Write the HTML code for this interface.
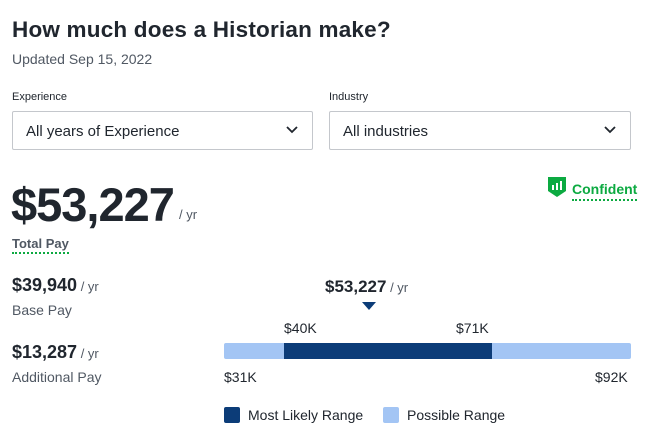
<!DOCTYPE html><html><head><style>
body{margin:0;width:654px;height:446px;background:#fff;font-family:"Liberation Sans",sans-serif;color:#20262e;position:relative;overflow:hidden}
.a{position:absolute;white-space:nowrap}
.sel{position:absolute;top:111px;height:39px;border:1px solid #c4c7cc;border-radius:2px;box-sizing:border-box;font-size:15px;line-height:39px;padding-left:13px}
.sel svg{position:absolute;right:14px;top:14px}
.g{color:#505863}
</style></head><body>
<div class="a" style="left:12px;top:17px;font-size:22.5px;letter-spacing:0.2px;font-weight:bold">How much does a Historian make?</div>
<div class="a g" style="left:12px;top:51px;font-size:14px">Updated Sep 15, 2022</div>
<div class="a" style="left:12px;top:91px;font-size:11px">Experience</div>
<div class="a" style="left:329px;top:91px;font-size:11px">Industry</div>
<div class="sel" style="left:12px;width:301px">All years of Experience<svg width="12" height="8"><path d="M1 1l5 5 5-5" stroke="#20262e" stroke-width="1.8" fill="none"/></svg></div>
<div class="sel" style="left:329px;width:302px">All industries<svg width="12" height="8"><path d="M1 1l5 5 5-5" stroke="#20262e" stroke-width="1.8" fill="none"/></svg></div>
<div class="a" style="left:11px;top:177px;font-size:47px;font-weight:bold;letter-spacing:-1px">$53,227</div>
<div class="a g" style="left:179px;top:207px;font-size:13px">/ yr</div>
<div class="a g" style="left:12px;top:236px;font-size:13px;font-weight:bold;border-bottom:2px dotted #0caa41;padding-bottom:1px">Total Pay</div>
<svg class="a" style="left:547px;top:176px" width="20" height="22"><path d="M1 1h18v14l-9 6-9-6z" fill="#0caa41"/><rect x="5" y="9" width="2" height="5" fill="#fff"/><rect x="9" y="7" width="2" height="7" fill="#fff"/><rect x="13" y="5" width="2" height="9" fill="#fff"/></svg>
<div class="a" style="left:572px;top:181px;font-size:14px;font-weight:bold;color:#0caa41;border-bottom:2px dotted #0caa41;padding-bottom:2px">Confident</div>
<div class="a" style="left:12px;top:275px;font-size:18px;font-weight:bold">$39,940<span class="g" style="font-size:13px;font-weight:normal"> / yr</span></div>
<div class="a g" style="left:12px;top:302px;font-size:14px">Base Pay</div>
<div class="a" style="left:12px;top:342px;font-size:18px;font-weight:bold">$13,287<span class="g" style="font-size:13px;font-weight:normal"> / yr</span></div>
<div class="a g" style="left:12px;top:369px;font-size:14px">Additional Pay</div>
<div class="a" style="left:325px;top:277px;font-size:17px;font-weight:bold">$53,227<span class="g" style="font-size:13px;font-weight:normal"> / yr</span></div>
<svg class="a" style="left:362px;top:302px" width="14" height="8"><path d="M0 0h14l-7 8z" fill="#0c3c78"/></svg>
<div class="a" style="left:284px;top:320px;font-size:14px">$40K</div>
<div class="a" style="left:456px;top:320px;font-size:14px">$71K</div>
<div class="a" style="left:224px;top:343px;width:407px;height:16px;background:#a3c5f4;border-radius:2px"></div>
<div class="a" style="left:284px;top:343px;width:208px;height:16px;background:#0c3c78"></div>
<div class="a" style="left:224px;top:369px;font-size:14px">$31K</div>
<div class="a" style="left:595px;top:369px;font-size:14px">$92K</div>
<div class="a" style="left:224px;top:407px;width:16px;height:16px;background:#0c3c78;border-radius:2px"></div>
<div class="a" style="left:248px;top:407px;font-size:14px">Most Likely Range</div>
<div class="a" style="left:383px;top:407px;width:16px;height:16px;background:#a3c5f4;border-radius:2px"></div>
<div class="a" style="left:407px;top:407px;font-size:14px">Possible Range</div>
</body></html>
